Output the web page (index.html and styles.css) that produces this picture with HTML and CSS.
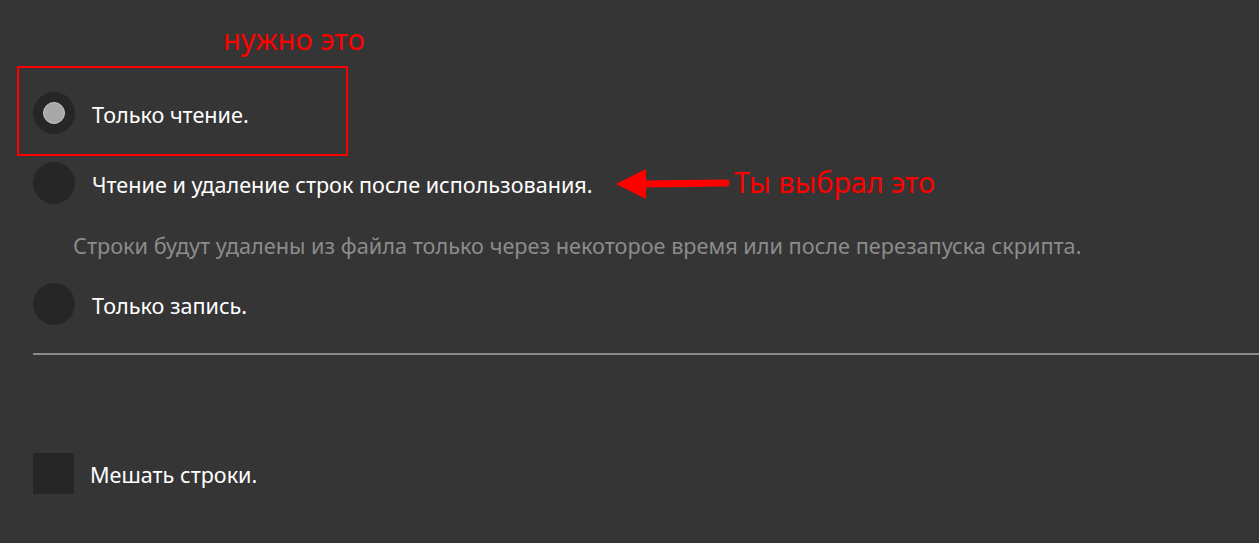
FILE: index.html
```html
<!DOCTYPE html>
<html lang="ru">
<head>
    <meta charset="UTF-8">
    <meta name="viewport" content="width=device-width, initial-scale=1.0">
    <title>Режим чтения строк</title>
    <link rel="stylesheet" href="styles.css">
</head>
<body>

    <div class="settings">
        <div class="option">
            <span class="radio checked"></span>
            <span class="label">Только чтение.</span>
        </div>
        <div class="option">
            <span class="radio"></span>
            <span class="label">Чтение и удаление строк после использования.</span>
        </div>
        <p class="hint">Строки будут удалены из файла только через некоторое время или после перезапуска скрипта.</p>
        <div class="option">
            <span class="radio"></span>
            <span class="label">Только запись.</span>
        </div>

        <hr class="divider">

        <div class="option check-option">
            <span class="checkbox"></span>
            <span class="label">Мешать строки.</span>
        </div>
    </div>

    <!-- annotations drawn over the screenshot -->
    <div class="note note-need">нужно это</div>
    <div class="mark-box"></div>
    <svg class="arrow" width="116" height="34" viewBox="0 0 116 34">
        <polygon points="0,17 30,2 30,32" fill="#ff0000"/>
        <line x1="26" y1="17" x2="110" y2="16" stroke="#ff0000" stroke-width="7" stroke-linecap="round"/>
    </svg>
    <div class="note note-picked">Ты выбрал это</div>

</body>
</html>
```

FILE: styles.css
```css
* {
    margin: 0;
    padding: 0;
    box-sizing: border-box;
}

body {
    font-family: 'Noto Sans', 'Open Sans', sans-serif;
    background: #353535;
    color: #fff;
    height: 100vh;
    overflow: hidden;
    position: relative;
}

.settings {
    padding: 92px 0 0 33px;
}

.option {
    display: flex;
    align-items: center;
    gap: 17px;
    height: 42px;
    margin-bottom: 28px;
}

.radio {
    width: 42px;
    height: 42px;
    border-radius: 50%;
    background: #262626;
    display: flex;
    justify-content: center;
    align-items: center;
    flex-shrink: 0;
}

.radio.checked::after {
    content: '';
    width: 20px;
    height: 20px;
    border-radius: 50%;
    background: #a8a8a8;
    border: 1px solid #c4c4c4;
}

.label {
    font-size: 21.6px;
    line-height: 28px;
    padding-top: 4px;
}

.hint {
    font-size: 21.7px;
    line-height: 28px;
    color: #8c8c8c;
    margin: 3px 0 23px 40px;
}

.divider {
    border: none;
    border-top: 2px solid #8a8a8a;
    margin-bottom: 97px;
}

.check-option {
    gap: 16px;
}

.checkbox {
    width: 41px;
    height: 41px;
    background: #262626;
    flex-shrink: 0;
}

.note {
    position: absolute;
    color: #ff0000;
    line-height: 30px;
}

.note-need {
    left: 223px;
    top: 24px;
    font-size: 29px;
}

.note-picked {
    left: 734px;
    top: 167px;
    font-size: 28.7px;
}

.mark-box {
    position: absolute;
    left: 17px;
    top: 66px;
    width: 331px;
    height: 90px;
    border: 2px solid #ff0000;
}

.arrow {
    position: absolute;
    left: 616px;
    top: 167px;
}
```
